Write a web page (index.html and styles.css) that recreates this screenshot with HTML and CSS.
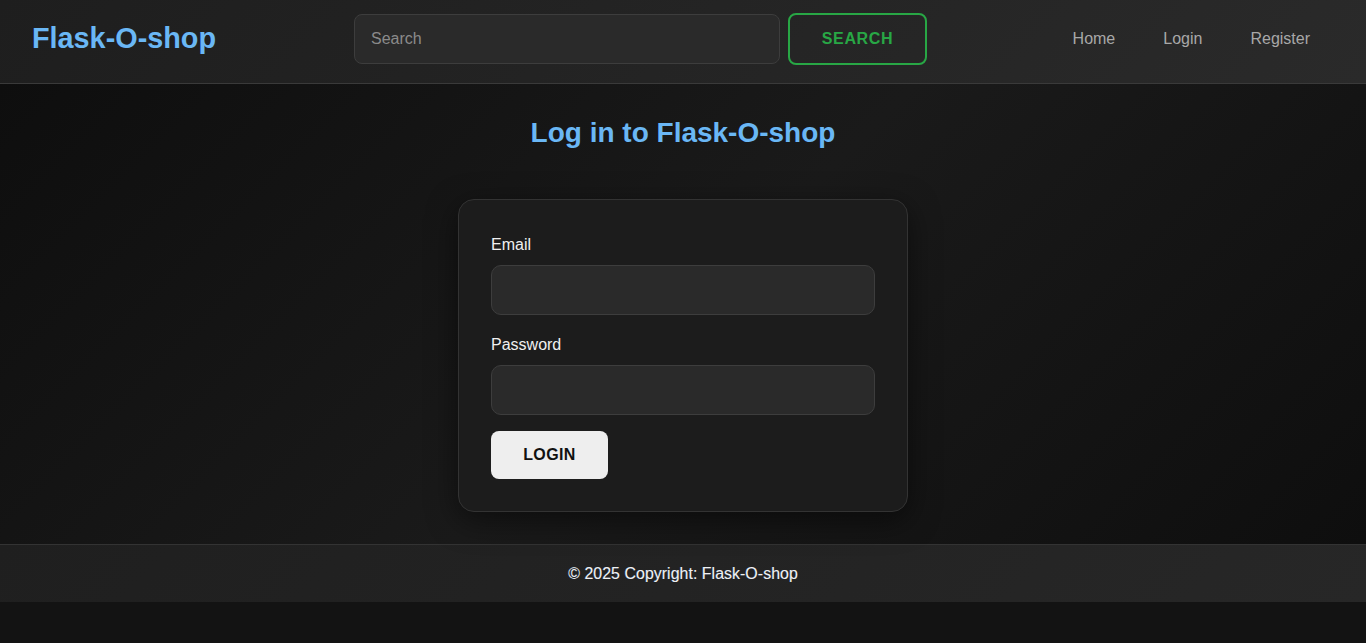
FILE: index.html
```html
<!DOCTYPE html>
<html lang="en">
<head>
<meta charset="utf-8">
<title>Flask-O-shop</title>
<link rel="stylesheet" href="styles.css">
</head>
<body>
<nav class="navbar">
  <a class="brand" href="#">Flask-O-shop</a>
  <form class="search">
    <input class="search-input" type="text" placeholder="Search">
    <button class="search-btn" type="button">SEARCH</button>
  </form>
  <ul class="nav-links">
    <li><a href="#">Home</a></li>
    <li><a href="#">Login</a></li>
    <li><a href="#">Register</a></li>
  </ul>
</nav>
<main class="main">
  <h1 class="title">Log in to Flask-O-shop</h1>
  <form class="card">
    <div class="group">
      <label class="label">Email</label>
      <input class="field" type="email">
    </div>
    <div class="group">
      <label class="label">Password</label>
      <input class="field" type="password">
    </div>
    <button class="login-btn" type="button">LOGIN</button>
  </form>
</main>
<footer class="footer">© 2025 Copyright: Flask-O-shop</footer>
</body>
</html>
```
FILE: styles.css
```css
* { box-sizing: border-box; }
html, body { margin: 0; padding: 0; }
body {
  background: #131313;
  font-family: "Liberation Sans", Arial, sans-serif;
  font-size: 16px;
  color: #f0f0f0;
  min-height: 643px;
}
.navbar {
  height: 84px;
  display: flex;
  align-items: center;
  padding: 0 32px 6px;
  background: linear-gradient(135deg, #1e1e1e 0%, #2a2a2a 100%);
  border-bottom: 1px solid #3a3a3a;
}
.brand {
  font-size: 28.8px;
  font-weight: bold;
  color: #6ab7f5;
  text-decoration: none;
  width: 322px;
  flex: none;
}
.search {
  display: flex;
  align-items: center;
  gap: 8px;
  margin: 0;
}
.search-input {
  width: 426px;
  height: 50px;
  background: #2a2a2a;
  border: 1px solid #3d3d3d;
  border-radius: 8px;
  padding: 0 16px;
  font-family: "Liberation Sans", Arial, sans-serif;
  font-size: 16px;
  color: #eee;
  outline: none;
}
.search-input::placeholder { color: #8a8a8a; }
.search-btn {
  width: 139px;
  height: 52px;
  background: transparent;
  border: 2px solid #28a745;
  border-radius: 8px;
  color: #28a745;
  font-family: "Liberation Sans", Arial, sans-serif;
  font-weight: bold;
  font-size: 16px;
  letter-spacing: 0.65px;
}
.nav-links {
  list-style: none;
  margin: 0 0 0 auto;
  padding: 0;
  display: flex;
}
.nav-links a {
  display: block;
  padding: 8px 24px;
  color: #a8a8a8;
  text-decoration: none;
  font-size: 16px;
}
.main {
  background: linear-gradient(135deg, #0e0e0e 0%, #1a1a1a 50%, #0e0e0e 100%);
  padding: 32px 0 32px;
  display: flex;
  flex-direction: column;
  align-items: center;
}
.title {
  margin: 0 0 49px;
  font-size: 28px;
  line-height: 34px;
  font-weight: bold;
  color: #6ab7f5;
}
.card {
  width: 450px;
  background: #1c1c1c;
  border: 1px solid #333;
  border-radius: 16px;
  padding: 32px;
  box-shadow: 0 8px 30px rgba(0, 0, 0, 0.5);
}
.group { margin-bottom: 17px; }
.group:last-of-type { margin-bottom: 16px; }
.label {
  display: block;
  font-size: 16px;
  line-height: 25px;
  color: #f0f0f0;
  margin-bottom: 8px;
}
.field {
  display: block;
  width: 100%;
  height: 50px;
  background: #2a2a2a;
  border: 1px solid #3d3d3d;
  border-radius: 10px;
  outline: none;
  color: #eee;
}
.login-btn {
  width: 117px;
  height: 48px;
  background: #eeeeee;
  border: none;
  border-radius: 8px;
  color: #111;
  font-family: "Liberation Sans", Arial, sans-serif;
  font-weight: bold;
  font-size: 16px;
  letter-spacing: 0.4px;
}
.footer {
  height: 58px;
  display: flex;
  align-items: center;
  justify-content: center;
  background: linear-gradient(135deg, #1f1f1f 0%, #272727 100%);
  border-top: 1px solid #333;
  color: #f0f0f0;
  font-size: 16px;
  text-shadow: -0.5px 0 0 rgba(120, 170, 255, 0.4);
}
```
